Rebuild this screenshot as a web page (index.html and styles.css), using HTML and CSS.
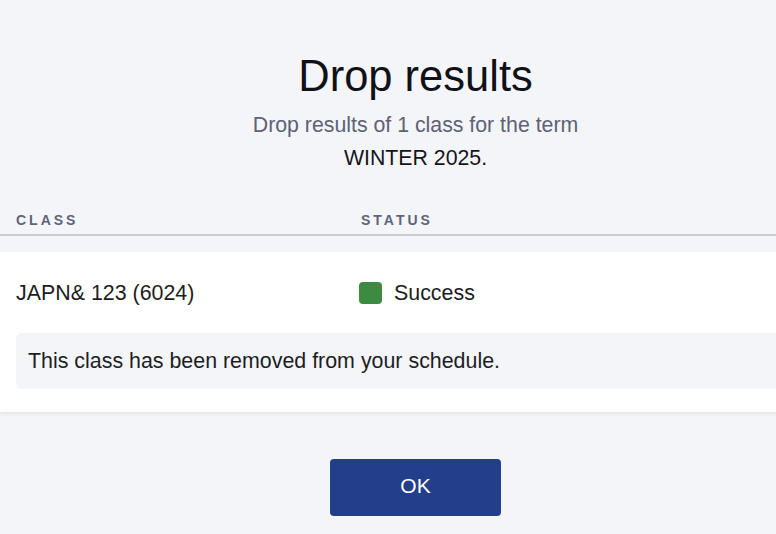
FILE: index.html
```html
<!DOCTYPE html>
<html lang="en">
<head>
<meta charset="utf-8">
<title>Drop results</title>
<link rel="stylesheet" href="styles.css">
</head>
<body>
<div class="dialog">
  <h1 class="title">Drop results</h1>
  <p class="subtitle">Drop results of 1 class for the term<br><span class="term">WINTER 2025.</span></p>
  <div class="table-head">
    <div class="col-class head-class">CLASS</div>
    <div class="col-status">STATUS</div>
  </div>
  <div class="card">
    <div class="row">
      <div class="col-class">JAPN&amp; 123 (6024)</div>
      <div class="col-status status"><span class="dot"></span>Success</div>
    </div>
    <div class="message">This class has been removed from your schedule.</div>
  </div>
  <div class="actions">
    <button class="ok-btn" type="button">OK</button>
  </div>
</div>
</body>
</html>
```

FILE: styles.css
```css
html, body {
  margin: 0;
  padding: 0;
  background: #f4f5f9;
  overflow: hidden;
}
body {
  font-family: "Liberation Sans", Arial, sans-serif;
  color: #1c1d22;
}
.dialog {
  width: 831px;
  padding-top: 50px;
}
.title {
  margin: 0;
  text-align: center;
  font-size: 43.5px;
  line-height: 52px;
  font-weight: normal;
  color: #111217;
}
.subtitle {
  margin: 7px 0 0;
  text-align: center;
  font-size: 21.3px;
  line-height: 33px;
  color: #5e6276;
}
.term {
  color: #15161a;
}
.table-head {
  display: flex;
  margin-top: 36px;
  padding: 0 16px 4px;
  border-bottom: 2px solid #c9cbd3;
  font-size: 14px;
  line-height: 19px;
  font-weight: bold;
  letter-spacing: 3px;
  color: #5f6479;
}
.col-class {
  width: 343px;
}
.head-class {
  width: 345px;
}
.card {
  margin-top: 16px;
  background: #ffffff;
  padding: 29px 16px 23px;
  box-shadow: 0 2px 3px rgba(40, 44, 70, 0.08);
}
.row {
  display: flex;
  align-items: center;
  font-size: 21.4px;
  line-height: 24px;
}
.status {
  display: flex;
  align-items: center;
}
.dot {
  display: inline-block;
  width: 23px;
  height: 22px;
  border-radius: 4px;
  background: #3d8b40;
  margin-right: 12px;
}
.message {
  margin-top: 28px;
  background: #f4f5f9;
  border-radius: 6px;
  padding: 16px 12px;
  font-size: 21.4px;
  line-height: 24px;
  color: #1d1e24;
}
.actions {
  display: flex;
  justify-content: center;
  margin-top: 47px;
}
.ok-btn {
  width: 171px;
  height: 57px;
  padding: 0 0 3px;
  border: none;
  border-radius: 4px;
  background: #233e8b;
  color: #ffffff;
  font-family: "Liberation Sans", Arial, sans-serif;
  font-size: 21px;
}
```
